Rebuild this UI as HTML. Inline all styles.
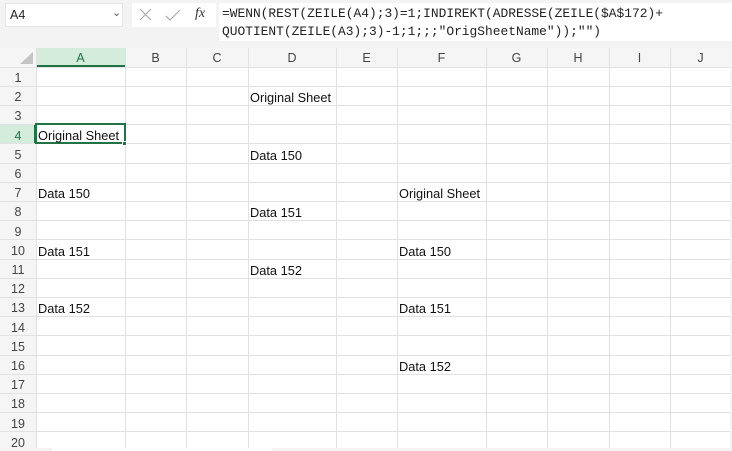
<!DOCTYPE html>
<html><head><meta charset="utf-8"><style>
*{margin:0;padding:0;box-sizing:border-box}
body{width:732px;height:451px;overflow:hidden;background:#f3f3f3;font-family:"Liberation Sans",sans-serif;position:relative}
.a{position:absolute}
.grid{position:absolute;left:0;top:48px;width:730px;height:400px;background:#fff;overflow:hidden}
.hl{position:absolute;left:0;width:730px;height:1px;background:#e1e1e1}
.vl{position:absolute;top:0;width:1px;height:400px;background:#e1e1e1}
.ch{position:absolute;top:1px;height:19px;font-size:12.5px;color:#444;text-align:center;line-height:19px}
.rh{position:absolute;left:0;width:36px;font-size:12.5px;color:#444;text-align:center}
.t{position:absolute;font-size:12.8px;color:#111;white-space:nowrap}
.f{position:absolute;font-family:"Liberation Mono",monospace;font-size:12.9px;color:#222;white-space:pre}
</style></head><body>
<div class="a" style="left:5px;top:3px;width:118px;height:24px;background:#fff;border:1px solid #e6e6e6"></div>
<div class="a" style="left:10px;top:8px;font-size:12.5px;color:#222">A4</div>
<div class="a" style="left:112px;top:6px;font-size:11px;color:#555">&#8964;</div>
<div class="a" style="left:132px;top:3px;width:84px;height:24px;background:#fff"></div>
<svg class="a" style="left:138px;top:7px" width="60" height="16"><path d="M2 2L13 13M13 2L2 13" stroke="#aaa" stroke-width="1.2" fill="none"/><path d="M28 9L32 13L42 3" stroke="#aaa" stroke-width="1.2" fill="none"/></svg>
<div class="a" style="left:195px;top:6px;font-family:'Liberation Serif',serif;font-style:italic;font-size:14px;color:#333">fx</div>
<div class="a" style="left:219px;top:3px;width:513px;height:38px;background:#fff"></div>
<div class="f" style="left:222px;top:6px">=WENN(REST(ZEILE(A4);3)=1;INDIREKT(ADRESSE(ZEILE($A$172)+</div>
<div class="f" style="left:222px;top:24px">QUOTIENT(ZEILE(A3);3)-1;1;;;"OrigSheetName"));"")</div>

<div class="grid">
<div class="a" style="left:0;top:0;width:730px;height:19px;background:#f5f5f5"></div>
<div class="a" style="left:0;top:0;width:36px;height:400px;background:#f5f5f5"></div>
<svg class="a" style="left:20px;top:4px" width="14" height="13"><path d="M13 0L13 12L0 12Z" fill="#c4c4c4"/></svg>
<div class="a" style="left:36px;top:0;width:89px;height:19px;background:#d3ecdc;border-bottom:2px solid #217346"></div>
<div class="a" style="left:0;top:76px;width:36px;height:19px;background:#d3ecdc"></div>
<div class="a" style="left:34px;top:76px;width:2px;height:19px;background:#217346"></div>
<div class="ch" style="left:36px;width:89px;color:#217346">A</div>
<div class="ch" style="left:125px;width:61px">B</div>
<div class="ch" style="left:186px;width:62px">C</div>
<div class="ch" style="left:248px;width:88px">D</div>
<div class="ch" style="left:336px;width:61px">E</div>
<div class="ch" style="left:397px;width:89px">F</div>
<div class="ch" style="left:486px;width:61px">G</div>
<div class="ch" style="left:547px;width:62px">H</div>
<div class="ch" style="left:609px;width:61px">I</div>
<div class="ch" style="left:670px;width:61px">J</div>
<div class="vl" style="left:36px"></div><div class="vl" style="left:125px"></div><div class="vl" style="left:186px"></div><div class="vl" style="left:248px"></div><div class="vl" style="left:336px"></div><div class="vl" style="left:397px"></div><div class="vl" style="left:486px"></div><div class="vl" style="left:547px"></div><div class="vl" style="left:609px"></div><div class="vl" style="left:670px"></div>
<div class="hl" style="top:19px"></div>
<div class="hl" style="top:38px"></div><div class="hl" style="top:57px"></div><div class="hl" style="top:76px"></div><div class="hl" style="top:95px"></div><div class="hl" style="top:115px"></div><div class="hl" style="top:134px"></div><div class="hl" style="top:153px"></div><div class="hl" style="top:172px"></div><div class="hl" style="top:191px"></div><div class="hl" style="top:211px"></div><div class="hl" style="top:230px"></div><div class="hl" style="top:249px"></div><div class="hl" style="top:268px"></div><div class="hl" style="top:287px"></div><div class="hl" style="top:307px"></div><div class="hl" style="top:326px"></div><div class="hl" style="top:345px"></div><div class="hl" style="top:364px"></div><div class="hl" style="top:383px"></div>
<div class="rh" style="top:23px">1</div><div class="rh" style="top:42px">2</div><div class="rh" style="top:61px">3</div><div class="rh" style="top:81px;color:#217346">4</div><div class="rh" style="top:100px">5</div><div class="rh" style="top:119px">6</div><div class="rh" style="top:138px">7</div><div class="rh" style="top:157px">8</div><div class="rh" style="top:177px">9</div><div class="rh" style="top:196px">10</div><div class="rh" style="top:215px">11</div><div class="rh" style="top:234px">12</div><div class="rh" style="top:253px">13</div><div class="rh" style="top:273px">14</div><div class="rh" style="top:292px">15</div><div class="rh" style="top:311px">16</div><div class="rh" style="top:330px">17</div><div class="rh" style="top:349px">18</div><div class="rh" style="top:369px">19</div><div class="rh" style="top:388px">20</div>
<div class="t" style="left:250px;top:42px">Original Sheet</div>
<div class="a" style="left:35px;top:75px;width:91px;height:21px;border:2px solid #217346"></div>
<div class="a" style="left:122px;top:93px;width:5px;height:5px;background:#217346;border:1px solid #fff"></div>
<div class="t" style="left:38px;top:80px">Original Sheet</div>
<div class="t" style="left:250px;top:100px">Data 150</div>
<div class="t" style="left:38px;top:138px">Data 150</div>
<div class="t" style="left:399px;top:138px">Original Sheet</div>
<div class="t" style="left:250px;top:157px">Data 151</div>
<div class="t" style="left:38px;top:196px">Data 151</div>
<div class="t" style="left:399px;top:196px">Data 150</div>
<div class="t" style="left:250px;top:215px">Data 152</div>
<div class="t" style="left:38px;top:253px">Data 152</div>
<div class="t" style="left:399px;top:253px">Data 151</div>
<div class="t" style="left:399px;top:311px">Data 152</div>
</div>
<div class="a" style="left:52px;top:448px;width:220px;height:3px;background:#fff"></div>
</body></html>
